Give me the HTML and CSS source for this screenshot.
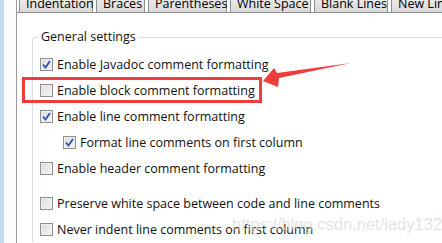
FILE: index.html
```html
<!DOCTYPE html>
<html>
<head>
<meta charset="utf-8">
<link rel="stylesheet" href="styles.css">
</head>
<body>
<div class="app">
  <div class="side"></div>
  <div class="gutter"></div>
  <div class="panel">
    <div class="tabs">
      <div class="tab t1">Indentation</div>
      <div class="tab t2">Braces</div>
      <div class="tab t3">Parentheses</div>
      <div class="tab t4">White Space</div>
      <div class="tab t5">Blank Lines</div>
      <div class="tab t6">New Lines</div>
    </div>
    <div class="content">
      <div class="group">
        <div class="legend">General settings</div>
        <div class="row"><span class="cb on"><svg viewBox="0 0 9 9" width="9" height="9"><path d="M1 4.5 L3.5 7.5 L8 1" fill="none" stroke="#2d4fb5" stroke-width="1.8"/></svg></span>Enable Javadoc comment formatting</div>
        <div class="row"><span class="cb"></span>Enable block comment formatting</div>
        <div class="row"><span class="cb on"><svg viewBox="0 0 9 9" width="9" height="9"><path d="M1 4.5 L3.5 7.5 L8 1" fill="none" stroke="#2d4fb5" stroke-width="1.8"/></svg></span>Enable line comment formatting</div>
        <div class="row sub"><span class="cb on"><svg viewBox="0 0 9 9" width="9" height="9"><path d="M1 4.5 L3.5 7.5 L8 1" fill="none" stroke="#2d4fb5" stroke-width="1.8"/></svg></span>Format line comments on first column</div>
        <div class="row"><span class="cb"></span>Enable header comment formatting</div>
        <div class="row gap"><span class="cb"></span>Preserve white space between code and line comments</div>
        <div class="row"><span class="cb"></span>Never indent line comments on first column</div>
      </div>
    </div>
  </div>
</div>
<div class="highlight"></div>
<svg class="arrow" width="442" height="243" viewBox="0 0 442 243">
  <polygon points="263,81 274,68 277,73 351,63 279,78 278,87" fill="#f23b3b"/>
</svg>
<div class="watermark">https://blog.csdn.net/lady132</div>
</body>
</html>
```
FILE: styles.css
```css
html, body {
  margin: 0;
  padding: 0;
  width: 442px;
  height: 243px;
  overflow: hidden;
  background: #ffffff;
  font-family: "Open Sans", "Liberation Sans", sans-serif;
  font-size: 12.5px;
  color: #111;
}
.app {
  display: flex;
  height: 243px;
}
.side {
  flex: none;
  width: 4px;
  background: #c6dbf3;
}
.gutter {
  flex: none;
  width: 12px;
  background: #fbfbfb;
}
.panel {
  flex: 1;
  min-width: 0;
  border-left: 1px solid #9a9a9a;
  display: flex;
  flex-direction: column;
}
.tabs {
  height: 12px;
  display: flex;
  align-items: flex-end;
  padding-left: 2px;
  overflow: hidden;
  background: #fff;
}
.tab {
  height: 20px;
  box-sizing: border-box;
  border: 1px solid #8e8f8f;
  border-bottom: none;
  background: linear-gradient(#f2f2f2, #d9d9d9);
  line-height: 21px;
  padding: 0 6px;
  white-space: nowrap;
  margin-right: 3px;
  flex: none;
  color: #000;
}
.t1 { width: 74px; }
.t2 { width: 49px; }
.t3 { width: 79px; }
.t4 { width: 81px; }
.t5 { width: 74px; }
.t6 { width: 70px; }
.content {
  flex: 1;
  border-top: 1px solid #8e8f8f;
  padding: 24px 0 0 15px;
}
.group {
  position: relative;
  border: 1px solid #d5dfe5;
  border-right: none;
  border-bottom: none;
  border-top-left-radius: 4px;
  padding: 13px 0 0 7px;
}
.legend {
  position: absolute;
  top: -9px;
  left: 6px;
  background: #fff;
  padding: 0 2px;
  line-height: 16px;
}
.row {
  display: flex;
  align-items: center;
  height: 26px;
  white-space: nowrap;
}
.row.sub { padding-left: 23px; }
.row.gap { margin-top: 9px; }
.cb {
  width: 11px;
  height: 11px;
  border: 1px solid #8f8f8f;
  background: linear-gradient(135deg, #dcdcdc, #f6f6f6);
  box-shadow: inset 0 0 0 1px #f0f0f0;
  margin-right: 4px;
  display: flex;
  align-items: center;
  justify-content: center;
  flex: none;
}
.highlight {
  position: absolute;
  left: 22px;
  top: 77px;
  width: 234px;
  height: 20px;
  border: 3px solid #f23b3b;
}
.arrow {
  position: absolute;
  left: 0;
  top: 0;
}
.watermark {
  position: absolute;
  left: 232px;
  top: 215px;
  font-family: "Liberation Sans", sans-serif;
  font-size: 16.5px;
  color: rgba(215, 215, 215, 0.7);
}
```
